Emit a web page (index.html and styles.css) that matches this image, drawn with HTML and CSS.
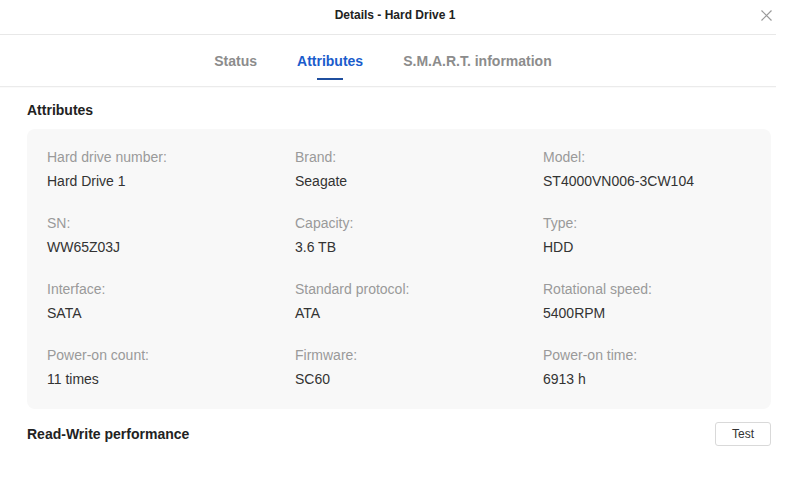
FILE: index.html
```html
<!DOCTYPE html>
<html lang="en">
<head>
  <meta charset="UTF-8">
  <title>Details - Hard Drive 1</title>
  <link rel="stylesheet" href="styles.css">
</head>
<body>
  <div class="dialog">
    <header class="dialog-head">
      <div class="dialog-title">Details - Hard Drive 1</div>
      <button class="close-btn" aria-label="Close">
        <svg width="11" height="11" viewBox="0 0 11 11">
          <path d="M0.5 0.5L10.5 10.5M10.5 0.5L0.5 10.5" stroke="#9a9a9a" stroke-width="1.2" fill="none"/>
        </svg>
      </button>
    </header>

    <nav class="tabs">
      <a class="tab">Status</a>
      <a class="tab active">Attributes</a>
      <a class="tab">S.M.A.R.T. information</a>
    </nav>

    <section class="content">
      <h2 class="section-title">Attributes</h2>
      <div class="attr-card">
        <div class="attr">
          <div class="attr-label">Hard drive number:</div>
          <div class="attr-value">Hard Drive 1</div>
        </div>
        <div class="attr">
          <div class="attr-label">Brand:</div>
          <div class="attr-value">Seagate</div>
        </div>
        <div class="attr">
          <div class="attr-label">Model:</div>
          <div class="attr-value">ST4000VN006-3CW104</div>
        </div>
        <div class="attr">
          <div class="attr-label">SN:</div>
          <div class="attr-value">WW65Z03J</div>
        </div>
        <div class="attr">
          <div class="attr-label">Capacity:</div>
          <div class="attr-value">3.6 TB</div>
        </div>
        <div class="attr">
          <div class="attr-label">Type:</div>
          <div class="attr-value">HDD</div>
        </div>
        <div class="attr">
          <div class="attr-label">Interface:</div>
          <div class="attr-value">SATA</div>
        </div>
        <div class="attr">
          <div class="attr-label">Standard protocol:</div>
          <div class="attr-value">ATA</div>
        </div>
        <div class="attr">
          <div class="attr-label">Rotational speed:</div>
          <div class="attr-value">5400RPM</div>
        </div>
        <div class="attr">
          <div class="attr-label">Power-on count:</div>
          <div class="attr-value">11 times</div>
        </div>
        <div class="attr">
          <div class="attr-label">Firmware:</div>
          <div class="attr-value">SC60</div>
        </div>
        <div class="attr">
          <div class="attr-label">Power-on time:</div>
          <div class="attr-value">6913 h</div>
        </div>
      </div>

      <div class="perf-row">
        <h2 class="section-title">Read-Write performance</h2>
        <button class="test-btn">Test</button>
      </div>
    </section>
  </div>
</body>
</html>
```

FILE: styles.css
```css
body {
  margin: 0;
  background-color: #fff;
  font-family: "Liberation Sans", Arial, sans-serif;
  color: #333;
}

.dialog {
  width: 776px;
}

.dialog-head {
  display: flex;
  align-items: center;
  height: 30px;
  padding-bottom: 4px;
  border-bottom: 1px solid #e8e8e8;
}

.dialog-title {
  flex: 1;
  text-align: center;
  padding-left: 29px;
  font-size: 12px;
  font-weight: bold;
  color: #222;
}

.close-btn {
  width: 11px;
  height: 11px;
  margin-right: 4px;
  padding: 0;
  border: none;
  background: none;
  display: flex;
  cursor: pointer;
}

.tabs {
  display: flex;
  justify-content: center;
  gap: 40px;
  height: 51px;
  padding-right: 10px;
  border-bottom: 1px solid #ebebeb;
  box-shadow: 0 1px 0 #fafafa;
}

.tab {
  display: flex;
  flex-direction: column;
  align-items: center;
  padding-top: 16px;
  font-size: 14px;
  font-weight: bold;
  line-height: 20px;
  color: #8c8c8c;
  cursor: pointer;
}

.tab.active {
  color: #1a5ccc;
}

.tab.active::after {
  content: "";
  width: 26px;
  height: 2px;
  margin-top: 7px;
  background-color: #1f4f9f;
}

.content {
  padding: 0 5px 0 27px;
}

.section-title {
  margin: 0;
  font-size: 14px;
  font-weight: bold;
  line-height: 20px;
  color: #222;
}

.content > .section-title {
  margin-top: 13px;
  margin-bottom: 9px;
}

.attr-card {
  display: grid;
  grid-template-columns: 248px 248px 1fr;
  row-gap: 22px;
  padding: 18px 20px 20px;
  background-color: #f8f8f8;
  border-radius: 8px;
}

.attr-label {
  font-size: 14px;
  line-height: 20px;
  color: #9a9a9a;
}

.attr-value {
  margin-top: 4px;
  font-size: 14px;
  line-height: 20px;
  color: #333;
}

.perf-row {
  display: flex;
  justify-content: space-between;
  align-items: center;
  height: 24px;
  margin-top: 13px;
}

.test-btn {
  width: 56px;
  height: 24px;
  padding: 0;
  font-family: inherit;
  font-size: 12px;
  color: #333;
  background-color: #fff;
  border: 1px solid #d9d9d9;
  border-radius: 3px;
  cursor: pointer;
}
```
